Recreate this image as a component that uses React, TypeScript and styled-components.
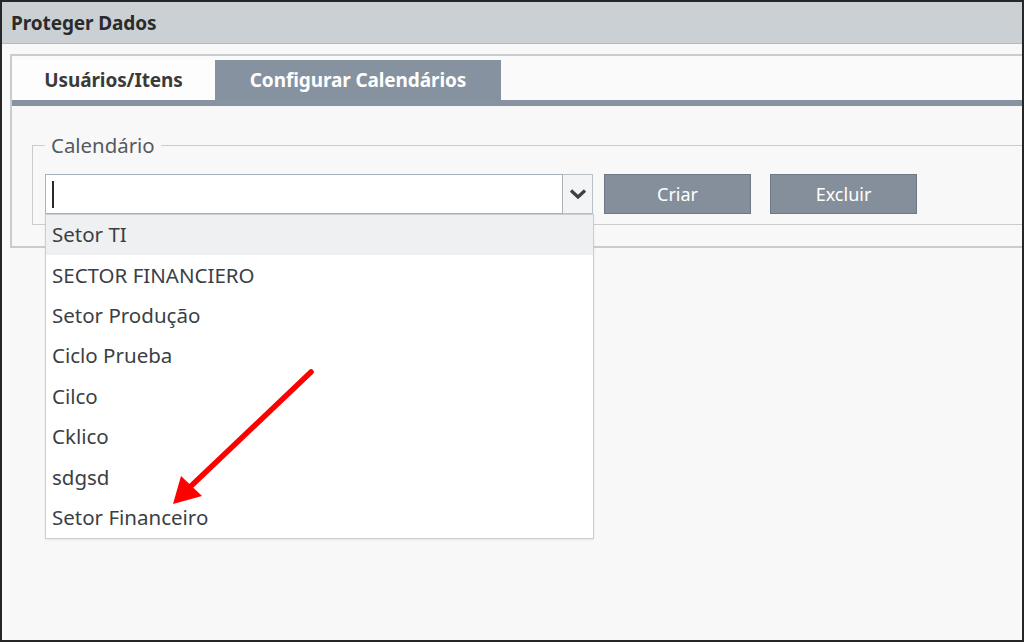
import styled, { createGlobalStyle } from "styled-components";

const GlobalStyle = createGlobalStyle`
  html, body {
    margin: 0;
    padding: 0;
    background: #f7f8f7;
  }
  * {
    box-sizing: border-box;
  }
`;

const Window = styled.div`
  position: relative;
  width: 1024px;
  height: 642px;
  border: 2px solid #262626;
  background: #f7f8f7;
  display: flex;
  flex-direction: column;
  font-family: "Noto Sans", "Open Sans", sans-serif;
  overflow: hidden;
`;

const TitleBar = styled.div`
  height: 42px;
  flex-shrink: 0;
  background: #cbd0d4;
  border-bottom: 1px solid #b3b9bf;
  padding-left: 9px;
  display: flex;
  align-items: center;
  font-size: 19px;
  font-weight: 700;
  color: #2b2b2b;
  letter-spacing: -0.1px;
`;

const Tabs = styled.div`
  margin: 10px 0 0 8px;
  border-top: 2px solid #c7ccd1;
  border-left: 2px solid #c7ccd1;
  background: #f9faf9;
`;

const TabList = styled.div`
  display: flex;
  align-items: flex-end;
  height: 44px;
`;

const Tab = styled.div<{ $active?: boolean; $width: number }>`
  width: ${(p) => p.$width}px;
  height: 40px;
  display: flex;
  align-items: center;
  justify-content: center;
  font-size: 19px;
  font-weight: 700;
  letter-spacing: -0.1px;
  color: ${(p) => (p.$active ? "#ffffff" : "#3a3a3a")};
  background: ${(p) => (p.$active ? "#8692a0" : "#fdfdfd")};
`;

const TabBar = styled.div`
  height: 6px;
  background: #8793a0;
`;

const Panel = styled.div`
  height: 142px;
  border-bottom: 2px solid #c7ccd1;
  padding: 29px 0 0 20px;
  background: #f7f8f7;
`;

const Group = styled.fieldset`
  margin: 0;
  padding: 18px 0 10px 12px;
  border: 1px solid #c9cdd1;
  border-right: none;
  min-width: 0;
`;

const Legend = styled.legend`
  margin-left: 0;
  padding: 0 6px;
  font-size: 20.4px;
  line-height: 21px;
  color: #555a60;
`;

const Row = styled.div`
  display: flex;
  align-items: center;
`;

const Combo = styled.div`
  position: relative;
  display: flex;
  height: 40px;
  width: 548px;
`;

const Field = styled.div`
  flex: 1;
  height: 40px;
  background: #ffffff;
  border: 1px solid #a9b1b9;
  display: flex;
  align-items: center;
  padding-left: 6px;
`;

const Caret = styled.span`
  width: 2px;
  height: 27px;
  background: #2a2a2a;
`;

const Toggle = styled.div`
  width: 30px;
  height: 40px;
  background: #f3f4f5;
  border: 1px solid #b9c0c6;
  border-left: none;
  display: flex;
  align-items: center;
  justify-content: center;
`;

const Options = styled.ul`
  position: absolute;
  top: 40px;
  left: 0;
  width: 549px;
  margin: 0;
  padding: 0;
  list-style: none;
  background: #ffffff;
  border: 1px solid #c9ced3;
  box-shadow: 0 1px 2px rgba(0, 0, 0, 0.08);
  z-index: 2;
`;

const Option = styled.li<{ $hover?: boolean }>`
  height: 40.4px;
  display: flex;
  align-items: center;
  padding: 0 0 2px 6px;
  font-size: 20.5px;
  color: #3a3f46;
  background: ${(p) => (p.$hover ? "#eef0f2" : "transparent")};
`;

const Button = styled.button<{ $gap: number }>`
  margin-left: ${(p) => p.$gap}px;
  width: 147px;
  height: 40px;
  background: #858f9b;
  border: 1px solid #6e7985;
  color: #ffffff;
  font-family: inherit;
  font-size: 18px;
  padding: 0;
  cursor: pointer;
`;

const Pointer = styled.svg`
  position: absolute;
  left: 0;
  top: 0;
  pointer-events: none;
  z-index: 3;
`;

const calendars = [
  "Setor TI",
  "SECTOR FINANCIERO",
  "Setor Produção",
  "Ciclo Prueba",
  "Cilco",
  "Cklico",
  "sdgsd",
  "Setor Financeiro",
];

export default function App() {
  return (
    <>
      <GlobalStyle />
      <Window>
        <TitleBar>Proteger Dados</TitleBar>
        <Tabs>
          <TabList>
            <Tab $width={203}>Usuários/Itens</Tab>
            <Tab $width={286} $active>
              Configurar Calendários
            </Tab>
          </TabList>
          <TabBar />
          <Panel>
            <Group>
              <Legend>Calendário</Legend>
              <Row>
                <Combo>
                  <Field>
                    <Caret />
                  </Field>
                  <Toggle>
                    <svg width="18" height="12" viewBox="0 0 18 12">
                      <path
                        d="M2 2.5 L9 9 L16 2.5"
                        fill="none"
                        stroke="#3f3f3f"
                        strokeWidth="3.2"
                      />
                    </svg>
                  </Toggle>
                  <Options>
                    {calendars.map((name, i) => (
                      <Option key={name} $hover={i === 0}>
                        {name}
                      </Option>
                    ))}
                  </Options>
                </Combo>
                <Button $gap={11}>Criar</Button>
                <Button $gap={19}>Excluir</Button>
              </Row>
            </Group>
          </Panel>
        </Tabs>
        <Pointer width="1020" height="638" viewBox="2 2 1020 638">
          <line
            x1="311"
            y1="372"
            x2="190"
            y2="487"
            stroke="#ff0000"
            strokeWidth="5.5"
            strokeLinecap="round"
          />
          <polygon points="173,504 181,476 202,496" fill="#ff0000" />
        </Pointer>
      </Window>
    </>
  );
}
